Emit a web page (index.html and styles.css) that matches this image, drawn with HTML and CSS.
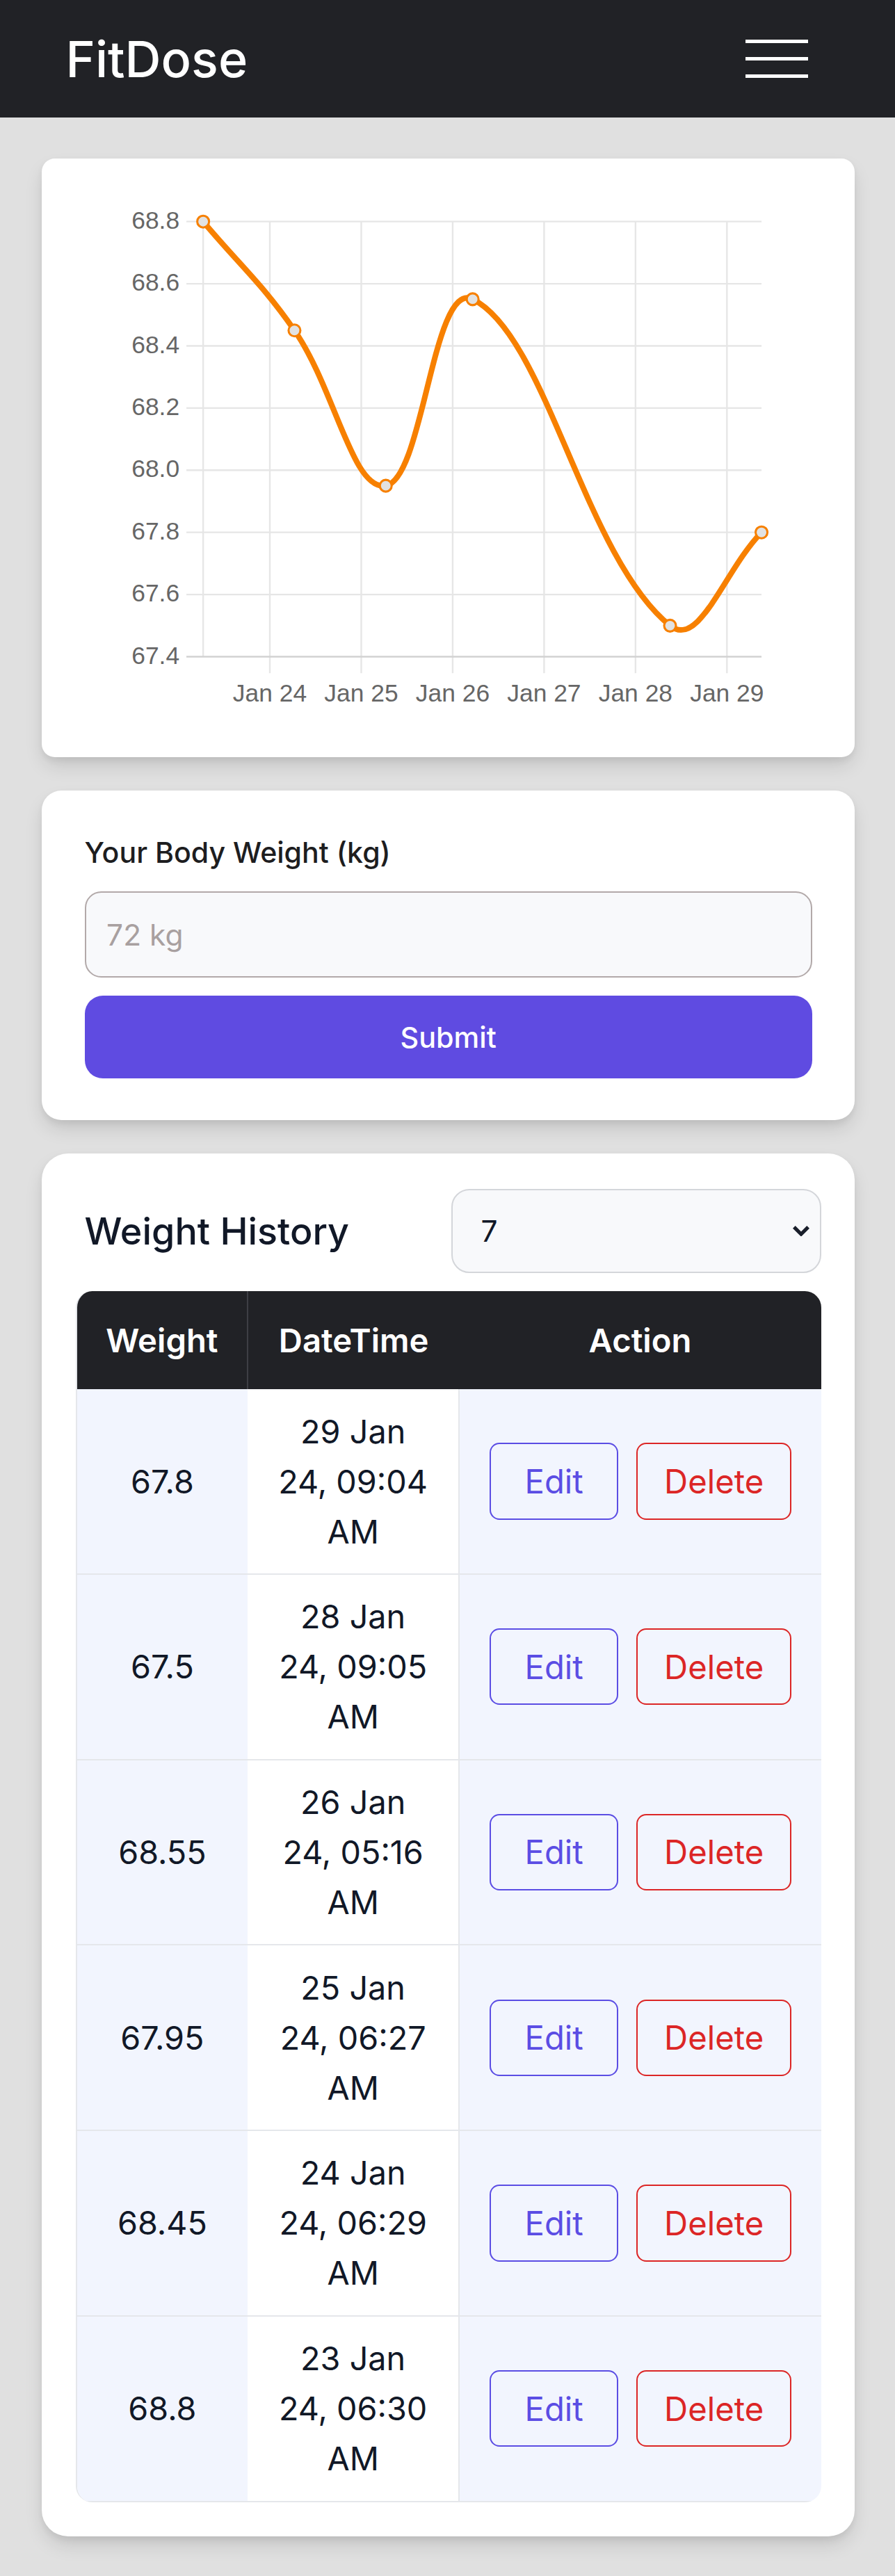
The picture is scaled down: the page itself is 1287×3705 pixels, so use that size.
FILE: index.html
```html
<!DOCTYPE html>
<html lang="en">
<head>
<meta charset="utf-8">
<title>FitDose</title>
<link rel="stylesheet" href="styles.css">
</head>
<body>
<header class="topbar">
  <div class="brand">FitDose</div>
  <button class="menu-btn" aria-label="Menu"><span></span><span></span><span></span></button>
</header>

<main class="page">
  <section class="card chart-card">
    <svg class="chart" viewBox="25.5 96.8 495 364.7" preserveAspectRatio="none" xmlns="http://www.w3.org/2000/svg">
      <g class="grid">
        <line class="grid-line" x1="113.6" y1="135.2" x2="463.8" y2="135.2"/>
        <line class="grid-line" x1="113.6" y1="173.06" x2="463.8" y2="173.06"/>
        <line class="grid-line" x1="113.6" y1="210.91" x2="463.8" y2="210.91"/>
        <line class="grid-line" x1="113.6" y1="248.77" x2="463.8" y2="248.77"/>
        <line class="grid-line" x1="113.6" y1="286.63" x2="463.8" y2="286.63"/>
        <line class="grid-line" x1="113.6" y1="324.49" x2="463.8" y2="324.49"/>
        <line class="grid-line" x1="113.6" y1="362.34" x2="463.8" y2="362.34"/>
        <line class="grid-line" x1="164.4" y1="135.2" x2="164.4" y2="410.3"/>
        <line class="grid-line" x1="220.07" y1="135.2" x2="220.07" y2="410.3"/>
        <line class="grid-line" x1="275.74" y1="135.2" x2="275.74" y2="410.3"/>
        <line class="grid-line" x1="331.41" y1="135.2" x2="331.41" y2="410.3"/>
        <line class="grid-line" x1="387.08" y1="135.2" x2="387.08" y2="410.3"/>
        <line class="grid-line" x1="442.75" y1="135.2" x2="442.75" y2="410.3"/>
        <line class="grid-line" x1="123.8" y1="135.2" x2="123.8" y2="400.2"/>
        <line class="axis-line" x1="113.6" y1="400.2" x2="463.8" y2="400.2"/>
      </g>
      <g class="y-labels">
        <text class="tick-label" x="109.4" y="139.5" text-anchor="end">68.8</text>
        <text class="tick-label" x="109.4" y="177.36" text-anchor="end">68.6</text>
        <text class="tick-label" x="109.4" y="215.21" text-anchor="end">68.4</text>
        <text class="tick-label" x="109.4" y="253.07" text-anchor="end">68.2</text>
        <text class="tick-label" x="109.4" y="290.93" text-anchor="end">68.0</text>
        <text class="tick-label" x="109.4" y="328.79" text-anchor="end">67.8</text>
        <text class="tick-label" x="109.4" y="366.64" text-anchor="end">67.6</text>
        <text class="tick-label" x="109.4" y="404.5" text-anchor="end">67.4</text>
      </g>
      <g class="x-labels">
        <text class="tick-label" x="164.4" y="427.7" text-anchor="middle">Jan 24</text>
        <text class="tick-label" x="220.07" y="427.7" text-anchor="middle">Jan 25</text>
        <text class="tick-label" x="275.74" y="427.7" text-anchor="middle">Jan 26</text>
        <text class="tick-label" x="331.41" y="427.7" text-anchor="middle">Jan 27</text>
        <text class="tick-label" x="387.08" y="427.7" text-anchor="middle">Jan 28</text>
        <text class="tick-label" x="442.75" y="427.7" text-anchor="middle">Jan 29</text>
      </g>
      <path class="trend-line" d="M123.8,135.2 C146.0,161.7 159.8,173.1 179.4,201.5 C204.3,237.5 214.7,299.6 235.0,296.1 C258.1,292.0 263.6,170.6 287.9,182.5 C332.9,204.6 355.7,339.0 408.1,381.3 C426.0,395.8 441.5,347.2 463.8,324.5"/>
      <g class="points">
        <circle class="trend-point" cx="123.8" cy="135.2" r="3.6"/>
        <circle class="trend-point" cx="179.4" cy="201.5" r="3.6"/>
        <circle class="trend-point" cx="235.0" cy="296.1" r="3.6"/>
        <circle class="trend-point" cx="287.9" cy="182.5" r="3.6"/>
        <circle class="trend-point" cx="408.1" cy="381.3" r="3.6"/>
        <circle class="trend-point" cx="463.8" cy="324.5" r="3.6"/>
      </g>
    </svg>
  </section>

  <section class="card form-card">
    <label class="field-label" for="weight">Your Body Weight (kg)</label>
    <input id="weight" class="field-input" type="text" placeholder="72 kg">
    <button class="submit-btn" type="button">Submit</button>
  </section>

  <section class="card history-card">
    <div class="history-head">
      <h2 class="history-title">Weight History</h2>
      <div class="select-wrap">
        <select class="range-select">
          <option>7</option>
          <option>14</option>
          <option>30</option>
        </select>
        <svg class="select-chevron" viewBox="0 0 11 7" xmlns="http://www.w3.org/2000/svg"><path d="M1.2 1.2 L5.5 5.5 L9.8 1.2"/></svg>
      </div>
    </div>
    <div class="table-wrap">
      <table class="history-table">
        <colgroup><col class="col-weight"><col class="col-date"><col class="col-action"></colgroup>
        <thead>
          <tr><th class="th-weight">Weight</th><th>DateTime</th><th>Action</th></tr>
        </thead>
        <tbody>
          <tr>
            <td class="cell-weight">67.8</td>
            <td class="cell-date">29 Jan<br>24, 09:04<br>AM</td>
            <td class="cell-action"><div class="actions"><button class="btn btn-edit" type="button">Edit</button><button class="btn btn-delete" type="button">Delete</button></div></td>
          </tr>
          <tr>
            <td class="cell-weight">67.5</td>
            <td class="cell-date">28 Jan<br>24, 09:05<br>AM</td>
            <td class="cell-action"><div class="actions"><button class="btn btn-edit" type="button">Edit</button><button class="btn btn-delete" type="button">Delete</button></div></td>
          </tr>
          <tr>
            <td class="cell-weight">68.55</td>
            <td class="cell-date">26 Jan<br>24, 05:16<br>AM</td>
            <td class="cell-action"><div class="actions"><button class="btn btn-edit" type="button">Edit</button><button class="btn btn-delete" type="button">Delete</button></div></td>
          </tr>
          <tr>
            <td class="cell-weight">67.95</td>
            <td class="cell-date">25 Jan<br>24, 06:27<br>AM</td>
            <td class="cell-action"><div class="actions"><button class="btn btn-edit" type="button">Edit</button><button class="btn btn-delete" type="button">Delete</button></div></td>
          </tr>
          <tr>
            <td class="cell-weight">68.45</td>
            <td class="cell-date">24 Jan<br>24, 06:29<br>AM</td>
            <td class="cell-action"><div class="actions"><button class="btn btn-edit" type="button">Edit</button><button class="btn btn-delete" type="button">Delete</button></div></td>
          </tr>
          <tr>
            <td class="cell-weight">68.8</td>
            <td class="cell-date">23 Jan<br>24, 06:30<br>AM</td>
            <td class="cell-action"><div class="actions"><button class="btn btn-edit" type="button">Edit</button><button class="btn btn-delete" type="button">Delete</button></div></td>
          </tr>
        </tbody>
      </table>
    </div>
  </section>
</main>
</body>
</html>
```

FILE: styles.css
```css
html {
  zoom: 2.3615;
}

body {
  margin: 0;
  background: #e0e0e0;
  font-family: Inter, "Noto Sans", "Liberation Sans", sans-serif;
  color: #111827;
}

/* top bar */
.topbar {
  height: 71.5px;
  box-sizing: border-box;
  background: #212226;
  display: flex;
  align-items: center;
  justify-content: space-between;
  padding: 0 53px 0 40px;
}

.brand {
  color: #fff;
  font-size: 30.5px;
  font-weight: 500;
  line-height: 36px;
}

.menu-btn {
  width: 38px;
  padding: 0;
  border: 0;
  background: none;
  display: flex;
  flex-direction: column;
  gap: 8.5px;
}

.menu-btn span {
  display: block;
  height: 2px;
  background: #fff;
}

/* page */
.page {
  padding: 25px 24.5px 25px 25.5px;
  display: flex;
  flex-direction: column;
  gap: 20.3px;
}

.card {
  background: #fff;
  box-shadow: 0 6px 12px -2px rgba(0, 0, 0, 0.14), 0 2px 4px rgba(0, 0, 0, 0.05);
}

/* chart */
.chart-card {
  height: 364.7px;
  border-radius: 8px;
}

.chart {
  display: block;
  width: 100%;
  height: 100%;
}

.grid-line {
  stroke: #e6e6e6;
  stroke-width: 1;
}

.axis-line {
  stroke: #d2d2d2;
  stroke-width: 1;
}

.tick-label {
  font-family: "Liberation Sans", Arial, sans-serif;
  font-size: 15px;
  fill: #666;
}

.trend-line {
  fill: none;
  stroke: #f78000;
  stroke-width: 3.4;
  stroke-linejoin: round;
  stroke-linecap: round;
}

.trend-point {
  fill: #e2e2e2;
  stroke: #f78000;
  stroke-width: 1.3;
}

/* form */
.form-card {
  border-radius: 12px;
  padding: 26px 26px 25.4px;
  display: flex;
  flex-direction: column;
}

.field-label {
  font-size: 17.4px;
  line-height: 24px;
  font-weight: 500;
  color: #1d1d1f;
}

.field-input {
  margin-top: 11.5px;
  height: 52.5px;
  box-sizing: border-box;
  border: 1px solid #b2a9a9;
  border-radius: 10px;
  background: #f8f9fb;
  padding: 0 12.5px;
  font-family: inherit;
  font-size: 18px;
  color: #111827;
  outline: none;
}

.field-input::placeholder {
  color: #a8a0a0;
}

.submit-btn {
  margin-top: 10.8px;
  height: 50.7px;
  border: 0;
  border-radius: 11px;
  background: #5f4be1;
  color: #fff;
  font-family: inherit;
  font-size: 17.5px;
  font-weight: 500;
}

/* history */
.history-card {
  border-radius: 16px;
  padding: 21.3px 20.5px 20.8px;
}

.history-head {
  display: flex;
  align-items: center;
  justify-content: space-between;
  margin-bottom: 10.9px;
}

.history-title {
  margin: 0 0 0 5.5px;
  font-size: 22.8px;
  font-weight: 500;
  color: #111827;
}

.select-wrap {
  position: relative;
  width: 225px;
}

.range-select {
  -webkit-appearance: none;
  appearance: none;
  display: block;
  width: 100%;
  height: 51.3px;
  box-sizing: border-box;
  border: 1px solid #d4d6da;
  border-radius: 11px;
  background: #f8f9fb;
  padding: 0 30px 0 17px;
  font-family: inherit;
  font-size: 18px;
  color: #111827;
}

.select-chevron {
  position: absolute;
  right: 6.7px;
  top: 22px;
  width: 11px;
  height: 7px;
  pointer-events: none;
}

.select-chevron path {
  fill: none;
  stroke: #1a1f2b;
  stroke-width: 2.2;
}

.table-wrap {
  border-left: 1px solid #e5e7eb;
  border-radius: 10px;
  overflow: hidden;
}

.history-table {
  width: 100%;
  border-collapse: collapse;
  table-layout: fixed;
}

.col-weight {
  width: 104px;
}

.col-date {
  width: 128.7px;
}

.history-table th {
  height: 60px;
  padding: 0;
  background: #212226;
  color: #fff;
  font-size: 20px;
  font-weight: 600;
}

.history-table .th-weight {
  border-right: 1px solid #3d3e44;
}

.history-table td {
  text-align: center;
  vertical-align: middle;
  font-size: 19.8px;
  color: #111827;
  padding: 10.3px 4px;
  border-bottom: 1px solid #e5e7eb;
}

.history-table .cell-date {
  line-height: 30.5px;
  background: #fff;
  border-right: 1px solid #e5e7eb;
}

.history-table .cell-weight,
.history-table .cell-action {
  background: #f2f5fe;
}

.actions {
  display: flex;
  justify-content: center;
  gap: 11px;
}

.btn {
  height: 46.7px;
  box-sizing: border-box;
  border: 1px solid;
  border-radius: 6px;
  background: transparent;
  font-family: inherit;
  font-size: 20px;
  line-height: 1;
}

.btn-edit {
  color: #5b4de4;
  border-color: #5b4de4;
  padding: 0 20.6px;
}

.btn-delete {
  color: #dc2626;
  border-color: #dc2626;
  padding: 0 16px;
}
```
